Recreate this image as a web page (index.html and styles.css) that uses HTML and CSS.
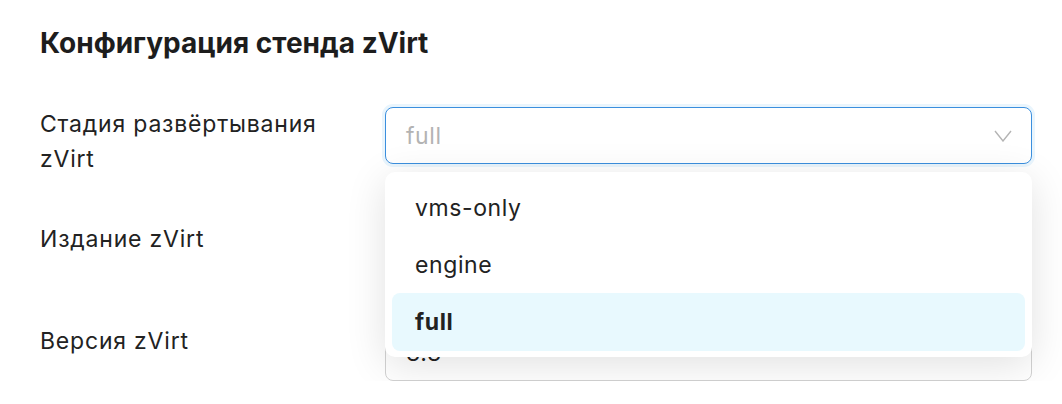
FILE: index.html
```html
<!DOCTYPE html>
<html lang="ru">
<head>
    <meta charset="UTF-8">
    <meta name="viewport" content="width=device-width, initial-scale=1.0">
    <title>Конфигурация стенда zVirt</title>
    <link rel="stylesheet" href="styles.css">
</head>
<body>

    <div class="form">
        <h2 class="form-title">Конфигурация стенда zVirt</h2>

        <div class="row">
            <label class="row-label">Стадия развёртывания zVirt</label>
            <div class="field">
                <div class="select select-open">
                    <span class="select-value placeholder">full</span>
                    <svg class="chevron" width="18" height="12" viewBox="0 0 18 12">
                        <polyline points="1,1 9,11 17,1" fill="none" stroke="#b4b4b4" stroke-width="1.4"/>
                    </svg>
                </div>

                <!-- открытый список -->
                <ul class="dropdown">
                    <li class="option">vms-only</li>
                    <li class="option">engine</li>
                    <li class="option selected">full</li>
                </ul>
            </div>
        </div>

        <div class="row">
            <label class="row-label">Издание zVirt</label>
            <div class="field">
                <div class="select">
                    <span class="select-value">standard</span>
                </div>
            </div>
        </div>

        <div class="row">
            <label class="row-label">Версия zVirt</label>
            <div class="field">
                <div class="select">
                    <span class="select-value">3.3</span>
                </div>
            </div>
        </div>
    </div>

</body>
</html>
```

FILE: styles.css
```css
body {
    font-family: 'Inter', 'Noto Sans', sans-serif;
    background: #fff;
    color: #222;
    margin: 0;
    padding: 0;
}
.form {
    padding: 23px 30px 0 40px;
}
.form-title {
    font-size: 28px;
    font-weight: 700;
    color: #1d1d1d;
    margin: 0 0 44px;
    line-height: 40px;
}
.row {
    display: flex;
    align-items: flex-start;
    margin-bottom: 45px;
}
.row:last-child {
    margin-bottom: 0;
}
.row-label {
    width: 300px;
    margin-right: 45px;
    font-size: 23px;
    letter-spacing: 0.8px;
    line-height: 35px;
    color: #222;
}
.field {
    flex: 1;
    position: relative;
}
.select {
    height: 57px;
    box-sizing: border-box;
    border: 1px solid #d2d2d2;
    border-radius: 8px;
    padding: 0 19px 0 20px;
    display: flex;
    align-items: center;
    justify-content: space-between;
    background: #fff;
}
.select-open {
    border-color: #3b8fde;
    box-shadow: 0 0 0 3px #e9f5fd;
}
.select-value {
    font-size: 23px;
    letter-spacing: 0.6px;
    color: #222;
}
.placeholder {
    color: #b3b3b3;
}
.chevron {
    display: block;
}

/* выпадающий список */
.dropdown {
    position: absolute;
    top: 65px;
    left: 0;
    right: 0;
    z-index: 10;
    list-style: none;
    margin: 0;
    padding: 7px 7px 6px;
    background: #fff;
    border-radius: 10px;
    box-shadow: 0 8px 40px rgba(0, 0, 0, 0.12);
}
.option {
    height: 57px;
    display: flex;
    align-items: center;
    padding: 0 23px;
    font-size: 23px;
    letter-spacing: 0.6px;
    color: #222;
    border-radius: 8px;
}
.option.selected {
    background: #e8f9fe;
    font-weight: 700;
    height: 58px;
}
```
